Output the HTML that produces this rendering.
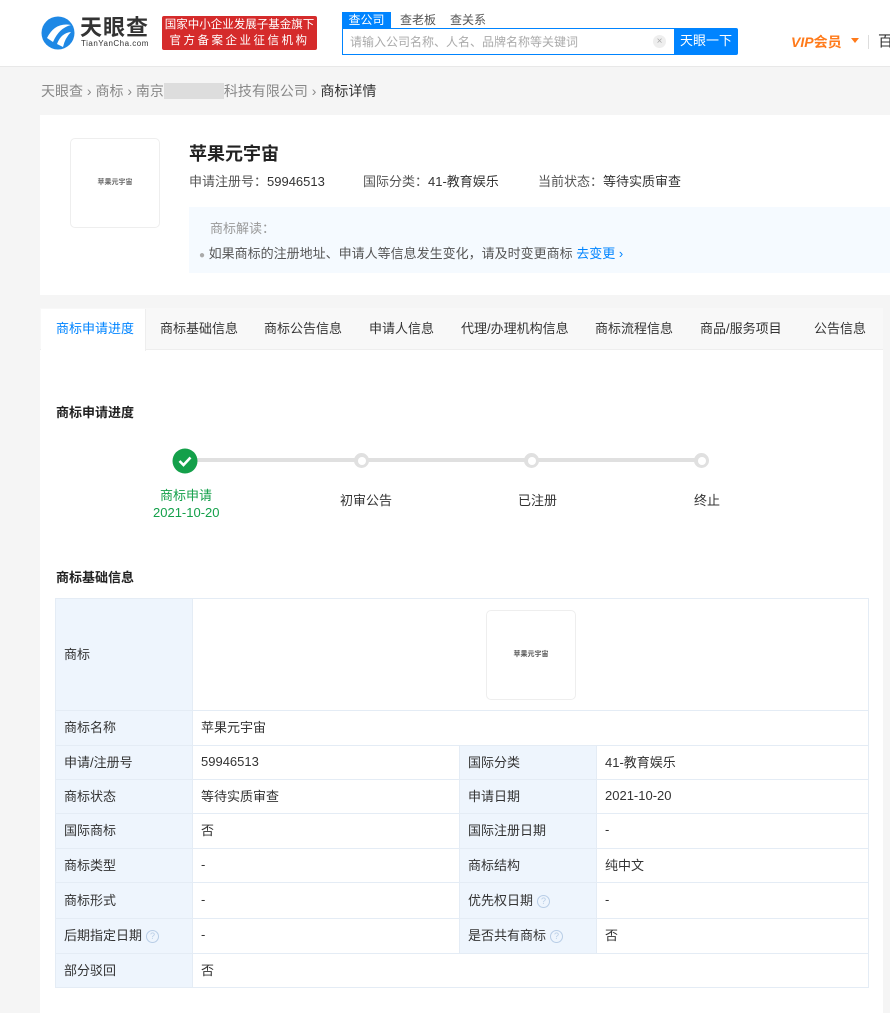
<!DOCTYPE html>
<html><head><meta charset="utf-8"><style>
*{margin:0;padding:0;box-sizing:border-box}
body{width:890px;height:1013px;overflow:hidden;background:#f5f5f5;font-family:"Liberation Sans","Noto Sans CJK SC",sans-serif;font-size:13px;color:#333;position:relative}
.abs{position:absolute}
.hdr{left:0;top:0;width:890px;height:67px;background:#fff;border-bottom:1px solid #e8e8e8}
.card{background:#fff}
table{border-collapse:collapse;position:absolute;left:55px;top:598px;width:814px}
td{border:1px solid #e4ecf5;padding:0 8px 3px;font-size:13px;color:#333}
td.k{background:#eef5fd;width:137px}
.q{display:inline-block;width:13px;height:13px;border:1px solid #b8cde6;border-radius:50%;color:#b8cde6;font-size:9px;line-height:11px;text-align:center;vertical-align:1px;margin-left:4px}
.tab{position:absolute;top:318px;font-size:13px;color:#333}
</style></head><body>
<div class="abs hdr">
  <svg class="abs" style="left:41px;top:16px" width="35" height="34" viewBox="0 0 35 34"><circle cx="17" cy="17" r="16.5" fill="#1e88e5"/><path d="M6 22 Q14 6 30 9 Q18 12 12 26Z" fill="#fff"/><path d="M16 28 Q20 17 30 16 Q24 22 22 31Z" fill="#fff"/></svg>
  <div class="abs" style="left:80px;top:10px;font-size:22px;font-weight:bold;color:#333;letter-spacing:1px">天眼查</div>
  <div class="abs" style="left:81px;top:39px;font-size:8px;color:#333;letter-spacing:0.5px">TianYanCha.com</div>
  <div class="abs" style="left:162px;top:16px;width:155px;height:34px;background:#d52b2b;border-radius:2px;color:#fff;font-size:11.5px;line-height:16px;text-align:center;padding-top:1px">国家中小企业发展子基金旗下<br><span style="letter-spacing:2.5px">官方备案企业征信机构</span></div>
  <div class="abs" style="left:342px;top:12px;width:49px;height:17px;background:#0084ff;color:#fff;font-size:12px;text-align:center;line-height:17px">查公司</div>
  <div class="abs" style="left:400px;top:12px;font-size:12px;color:#555;line-height:17px">查老板</div>
  <div class="abs" style="left:450px;top:12px;font-size:12px;color:#555;line-height:17px">查关系</div>
  <div class="abs" style="left:342px;top:28px;width:333px;height:27px;border:1px solid #0084ff;border-right:none;background:#fff"></div>
  <div class="abs" style="left:350px;top:33px;font-size:12px;color:#aaa">请输入公司名称、人名、品牌名称等关键词</div>
  <div class="abs" style="left:653px;top:35px;width:13px;height:13px;border-radius:50%;background:#eee;color:#aaa;font-size:10px;text-align:center;line-height:13px">×</div>
  <div class="abs" style="left:674px;top:28px;width:64px;height:27px;background:#0084ff;color:#fff;font-size:13px;text-align:center;line-height:25px;border-radius:0 2px 2px 0">天眼一下</div>
  <div class="abs" style="left:791px;top:32px;font-size:14px;font-weight:bold;font-style:italic;color:#ff7a1a">VIP<span style="font-style:normal">会员</span></div>
  <div class="abs" style="left:851px;top:38px;width:0;height:0;border:4px solid transparent;border-top:5px solid #ff7a1a"></div>
  <div class="abs" style="left:868px;top:35px;width:1px;height:14px;background:#ddd"></div>
  <div class="abs" style="left:878px;top:30px;font-size:15px;color:#333">百</div>
</div>
<div class="abs" style="left:41px;top:81px;font-size:14px;color:#888">天眼查 › 商标 › 南京<span style="display:inline-block;width:60px;height:16px;background:#ddd;vertical-align:-3px"></span>科技有限公司 › <span style="color:#333">商标详情</span></div>
<div class="abs card" style="left:40px;top:115px;width:850px;height:180px"></div>
<div class="abs" style="left:70px;top:138px;width:90px;height:90px;border:1px solid #eee;border-radius:5px;background:#fff;font-size:7px;color:#666;text-align:center;line-height:88px;font-weight:bold">苹果元宇宙</div>
<div class="abs" style="left:189px;top:140px;font-size:18px;font-weight:bold;color:#222">苹果元宇宙</div>
<div class="abs" style="left:189px;top:171px;font-size:13px;color:#555">申请注册号：<span style="color:#333">59946513</span></div>
<div class="abs" style="left:363px;top:171px;font-size:13px;color:#555">国际分类：<span style="color:#333">41-教育娱乐</span></div>
<div class="abs" style="left:538px;top:171px;font-size:13px;color:#555">当前状态：<span style="color:#333">等待实质审查</span></div>
<div class="abs" style="left:189px;top:207px;width:701px;height:66px;background:#f5faff"></div>
<div class="abs" style="left:210px;top:218px;font-size:13px;color:#999">商标解读：</div>
<div class="abs" style="left:199px;top:243px;font-size:13px;color:#555"><span style="color:#aaa;font-size:10px">●</span> 如果商标的注册地址、申请人等信息发生变化，请及时变更商标 <span style="color:#0084ff">去变更 ›</span></div>
<div class="abs card" style="left:40px;top:308px;width:843px;height:705px"></div>
<div class="abs" style="left:40px;top:308px;width:843px;height:42px;background:#f8f8f8;border-bottom:1px solid #eee"></div>
<div class="abs" style="left:41px;top:309px;width:105px;height:42px;background:#fff;border-right:1px solid #eee"></div>
<div class="tab" style="left:56px;color:#0084ff">商标申请进度</div>
<div class="tab" style="left:160px">商标基础信息</div>
<div class="tab" style="left:264px">商标公告信息</div>
<div class="tab" style="left:369px">申请人信息</div>
<div class="tab" style="left:461px">代理/办理机构信息</div>
<div class="tab" style="left:595px">商标流程信息</div>
<div class="tab" style="left:700px">商品/服务项目</div>
<div class="tab" style="left:814px">公告信息</div>
<div class="abs" style="left:56px;top:402px;font-size:13px;font-weight:bold;color:#222">商标申请进度</div>
<div class="abs" style="left:185px;top:458px;width:517px;height:4px;background:#e0e0e0"></div>
<svg class="abs" style="left:172px;top:448px" width="26" height="26"><circle cx="13" cy="13" r="12.5" fill="#14a04a"/><path d="M7.5 13 L11.5 17 L18.5 9.5" stroke="#fff" stroke-width="2.6" fill="none"/></svg>
<div class="abs" style="left:354px;top:453px;width:15px;height:15px;border-radius:50%;background:#e0e0e0"><div style="margin:3.5px;width:8px;height:8px;border-radius:50%;background:#fff"></div></div>
<div class="abs" style="left:524px;top:453px;width:15px;height:15px;border-radius:50%;background:#e0e0e0"><div style="margin:3.5px;width:8px;height:8px;border-radius:50%;background:#fff"></div></div>
<div class="abs" style="left:694px;top:453px;width:15px;height:15px;border-radius:50%;background:#e0e0e0"><div style="margin:3.5px;width:8px;height:8px;border-radius:50%;background:#fff"></div></div>
<div class="abs" style="left:160px;top:485px;font-size:13px;color:#14a04a">商标申请</div>
<div class="abs" style="left:153px;top:505px;font-size:13px;color:#14a04a">2021-10-20</div>
<div class="abs" style="left:340px;top:490px;font-size:13px">初审公告</div>
<div class="abs" style="left:518px;top:490px;font-size:13px">已注册</div>
<div class="abs" style="left:694px;top:490px;font-size:13px">终止</div>
<div class="abs" style="left:56px;top:567px;font-size:13px;font-weight:bold;color:#222">商标基础信息</div>
<table>
<tr style="height:112px"><td class="k">商标</td><td colspan="3" style="position:relative"><div style="position:absolute;left:293px;top:11px;width:90px;height:90px;border:1px solid #eee;border-radius:5px;font-size:7px;font-weight:bold;color:#555;text-align:center;line-height:88px">苹果元宇宙</div></td></tr>
<tr style="height:35px"><td class="k">商标名称</td><td colspan="3">苹果元宇宙</td></tr>
<tr style="height:34px"><td class="k">申请/注册号</td><td style="width:267px">59946513</td><td class="k">国际分类</td><td>41-教育娱乐</td></tr>
<tr style="height:34px"><td class="k">商标状态</td><td>等待实质审查</td><td class="k">申请日期</td><td>2021-10-20</td></tr>
<tr style="height:35px"><td class="k">国际商标</td><td>否</td><td class="k">国际注册日期</td><td>-</td></tr>
<tr style="height:34px"><td class="k">商标类型</td><td>-</td><td class="k">商标结构</td><td>纯中文</td></tr>
<tr style="height:36px"><td class="k">商标形式</td><td>-</td><td class="k">优先权日期<span class="q">?</span></td><td>-</td></tr>
<tr style="height:35px"><td class="k">后期指定日期<span class="q">?</span></td><td>-</td><td class="k">是否共有商标<span class="q">?</span></td><td>否</td></tr>
<tr style="height:34px"><td class="k">部分驳回</td><td colspan="3">否</td></tr>
</table>
</body></html>
